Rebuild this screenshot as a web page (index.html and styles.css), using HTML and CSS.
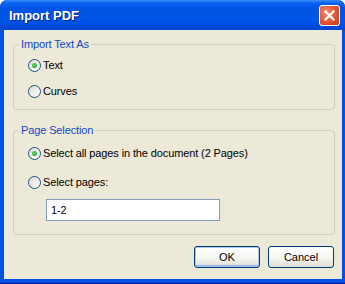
FILE: index.html
```html
<!DOCTYPE html>
<html lang="en">
<head>
    <meta charset="UTF-8">
    <title>Import PDF</title>
    <link rel="stylesheet" href="styles.css">
</head>
<body>
    <div class="window">
        <div class="titlebar">
            <span class="title">Import PDF</span>
            <button class="close" aria-label="Close">
                <svg width="11" height="11" viewBox="0 0 11 11">
                    <path d="M1.5 1.5 L9.5 9.5 M9.5 1.5 L1.5 9.5" stroke="#fff" stroke-width="2.2" stroke-linecap="square"/>
                </svg>
            </button>
        </div>

        <div class="content">
            <fieldset class="group group-text">
                <legend>Import Text As</legend>
                <div class="group-body">
                    <label class="radio"><span class="dot checked"></span>Text</label>
                    <label class="radio"><span class="dot"></span>Curves</label>
                </div>
            </fieldset>

            <fieldset class="group group-pages">
                <legend>Page Selection</legend>
                <div class="group-body">
                    <label class="radio"><span class="dot checked"></span>Select all pages in the document (2 Pages)</label>
                    <label class="radio"><span class="dot"></span>Select pages:</label>
                    <div class="field">1-2</div>
                </div>
            </fieldset>

            <div class="buttons">
                <button class="btn btn-default">OK</button>
                <button class="btn">Cancel</button>
            </div>
        </div>
    </div>
</body>
</html>
```

FILE: styles.css
```css
html, body {
    margin: 0;
    padding: 0;
    background: #fff;
}
body {
    font-family: 'Liberation Sans', Arial, sans-serif;
    font-size: 11px;
    letter-spacing: -0.12px;
    color: #000;
}
.window {
    width: 345px;
    height: 284px;
    box-sizing: border-box;
    background: #0052e6;
    border-radius: 7px 7px 0 0;
    padding: 0 3px 4px 4px;
    display: flex;
    flex-direction: column;
    border-bottom: 1px solid #00138c;
}
.titlebar {
    height: 30px;
    margin: 0 -3px 0 -4px;
    border-radius: 7px 7px 0 0;
    background: linear-gradient(#3c8efb 0, #0a62f0 3px, #0054e3 8px, #0056e8 20px, #0049d6 28px, #0047d0 30px);
    display: flex;
    align-items: center;
    justify-content: space-between;
    padding: 0 5px 0 9px;
}
.title {
    color: #fff;
    font-weight: bold;
    font-size: 13px;
    letter-spacing: 0;
    text-shadow: 1px 1px 0 #0a1d80;
    margin-top: 1px;
}
.close {
    width: 21px;
    height: 21px;
    padding: 0;
    border: 1px solid #fff;
    border-radius: 3px;
    background: radial-gradient(circle at 35% 35%, #f08a6a, #e0502c 60%, #c43b18);
    display: flex;
    align-items: center;
    justify-content: center;
    margin-top: 1px;
}
.content {
    flex: 1;
    background: #ece9d8;
    padding: 8px 7px 0 9px;
    display: flex;
    flex-direction: column;
}
.group {
    margin: 0;
    padding: 0;
    border: 1px solid #d0d0bf;
    border-radius: 4px;
}
.group legend {
    margin-left: 5px;
    padding: 0 2px;
    color: #1048c8;
    line-height: 13px;
}
.group-body {
    display: flex;
    flex-direction: column;
    padding-left: 14px;
}
.group-text .group-body {
    padding-top: 7px;
    padding-bottom: 11px;
    gap: 12px;
}
.group-pages {
    margin-top: 14px;
}
.group-pages .group-body {
    padding-top: 9px;
    padding-bottom: 13px;
    gap: 15px;
}
.group-pages .field {
    margin-top: -5px;
}
.radio {
    display: flex;
    align-items: center;
    height: 14px;
}
.dot {
    width: 11px;
    height: 11px;
    border: 1px solid #1c5180;
    border-radius: 50%;
    background: linear-gradient(135deg, #dcdcd4, #fff);
    margin-right: 2px;
    position: relative;
}
.dot.checked::after {
    content: "";
    position: absolute;
    left: 3px;
    top: 3px;
    width: 5px;
    height: 5px;
    border-radius: 50%;
    background: radial-gradient(circle at 40% 40%, #5ed45e, #21a121);
}
.field {
    width: 168px;
    height: 20px;
    margin-left: 18px;
    border: 1px solid #7f9db9;
    background: #fff;
    line-height: 20px;
    padding-left: 4px;
}
.buttons {
    display: flex;
    justify-content: flex-end;
    gap: 8px;
    margin-top: 11px;
    padding-right: 1px;
}
.btn {
    width: 66px;
    height: 22px;
    font-family: inherit;
    font-size: 11px;
    color: #000;
    border: 1px solid #003c74;
    border-radius: 3px;
    background: linear-gradient(#ffffff, #f4f4f0 60%, #dcdcd4);
    padding: 0;
}
.btn-default {
    box-shadow: inset 0 0 0 1px #b0c8f0, inset 0 -1px 0 1px #8cb0f0;
}
```
